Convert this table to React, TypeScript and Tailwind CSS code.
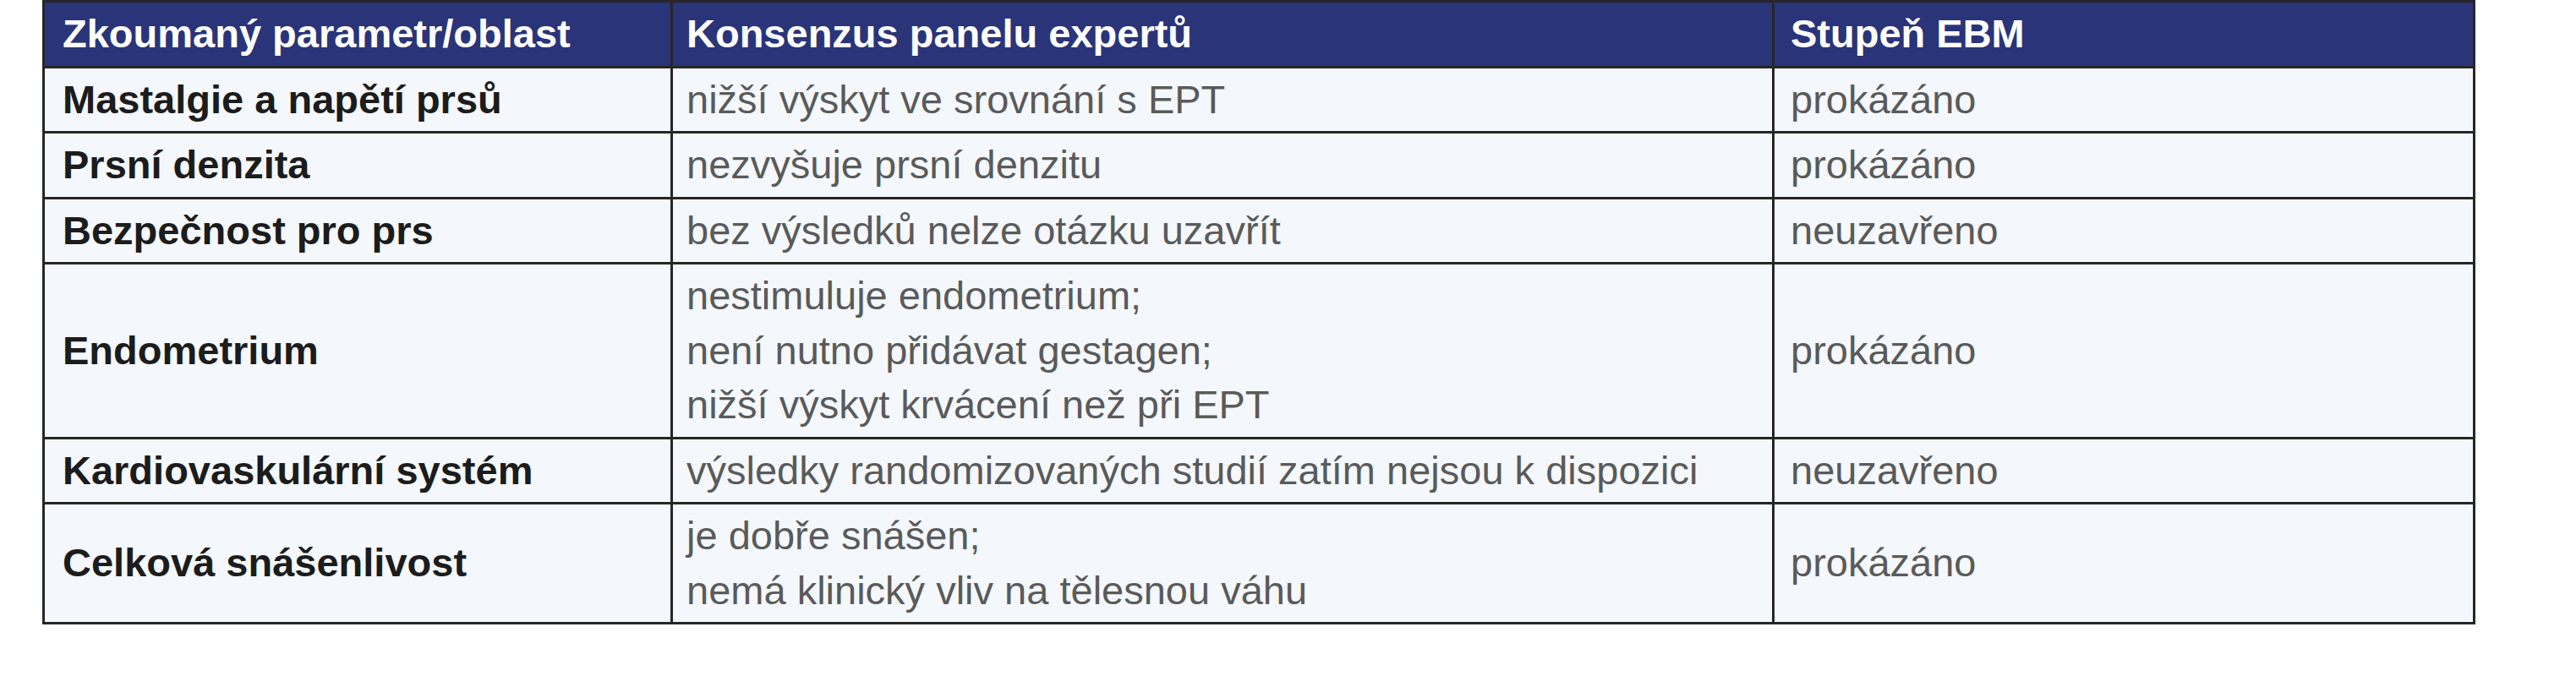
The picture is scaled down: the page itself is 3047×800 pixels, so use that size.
const rows: { label: string; lines: string[]; grade: string }[] = [
  { label: 'Mastalgie a napětí prsů', lines: ['nižší výskyt ve srovnání s EPT'], grade: 'prokázáno' },
  { label: 'Prsní denzita', lines: ['nezvyšuje prsní denzitu'], grade: 'prokázáno' },
  { label: 'Bezpečnost pro prs', lines: ['bez výsledků nelze otázku uzavřít'], grade: 'neuzavřeno' },
  {
    label: 'Endometrium',
    lines: ['nestimuluje endometrium;', 'není nutno přidávat gestagen;', 'nižší výskyt krvácení než při EPT'],
    grade: 'prokázáno',
  },
  {
    label: 'Kardiovaskulární systém',
    lines: ['výsledky randomizovaných studií zatím nejsou k dispozici'],
    grade: 'neuzavřeno',
  },
  {
    label: 'Celková snášenlivost',
    lines: ['je dobře snášen;', 'nemá klinický vliv na tělesnou váhu'],
    grade: 'prokázáno',
  },
];

export default function App() {
  return (
    <div className="min-h-[800px] w-full bg-white pl-[50px] font-['Liberation_Sans',Arial,sans-serif]">
      <table className="w-[2875px] table-fixed border-collapse border-[3px] border-[#262626] text-[47px] leading-[64.5px]">
        <colgroup>
          <col className="w-[743px]" />
          <col className="w-[1303px]" />
          <col className="w-[829px]" />
        </colgroup>
        <thead>
          <tr className="bg-[#2a3478] text-left font-bold text-white">
            <th className="border-[3px] border-[#262626] py-[5px] pl-[21px] align-middle">Zkoumaný parametr/oblast</th>
            <th className="border-[3px] border-[#262626] py-[5px] pl-[16px] align-middle">Konsenzus panelu expertů</th>
            <th className="border-[3px] border-[#262626] py-[5px] pl-[19px] align-middle">Stupeň EBM</th>
          </tr>
        </thead>
        <tbody>
          {rows.map((r) => (
            <tr key={r.label} className="bg-[#f4f8fc]">
              <td className="border-[3px] border-[#262626] py-[5px] pl-[21px] align-middle font-bold text-[#1c1c1c]">
                {r.label}
              </td>
              <td className="border-[3px] border-[#262626] py-[5px] pl-[16px] align-middle text-[#5a5a5a]">
                {r.lines.map((l) => (
                  <div key={l}>{l}</div>
                ))}
              </td>
              <td className="border-[3px] border-[#262626] py-[5px] pl-[19px] align-middle text-[#5a5a5a]">
                {r.grade}
              </td>
            </tr>
          ))}
        </tbody>
      </table>
    </div>
  );
}
